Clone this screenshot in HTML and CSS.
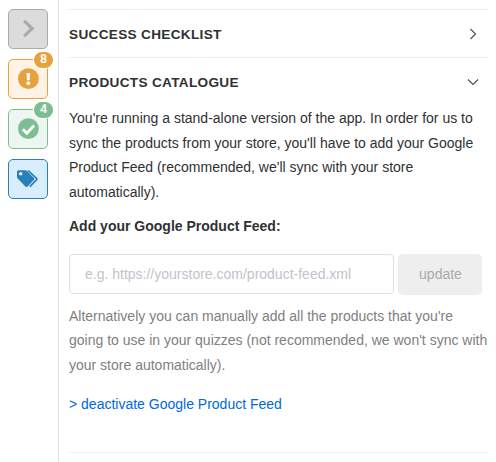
FILE: index.html
```html
<!DOCTYPE html>
<html lang="en">
<head>
<meta charset="utf-8">
<title>Products catalogue</title>
<link rel="stylesheet" href="styles.css">
</head>
<body>
<div class="app">
  <nav class="rail">
    <button class="tile tile-gray" aria-label="Expand">
      <svg width="38" height="38" viewBox="0 0 38 38"><path d="M15.2 10.8 23.2 18.5 15.2 26.2" fill="none" stroke="currentColor" stroke-width="3.2"/></svg>
    </button>
    <button class="tile tile-orange" aria-label="Warnings">
      <svg width="38" height="38" viewBox="0 0 38 38"><circle cx="19.4" cy="18.7" r="10.4" fill="currentColor"/><path d="M17.5 13h3.7l-.6 7.3h-2.5z" fill="#fff"/><circle cx="19.4" cy="23.2" r="1.9" fill="#fff"/></svg>
      <span class="badge"><b>8</b></span>
    </button>
    <button class="tile tile-green" aria-label="Completed">
      <svg width="38" height="38" viewBox="0 0 38 38"><circle cx="19.4" cy="18.7" r="10.4" fill="currentColor"/><path d="m13.8 19.2 4 4 7.3-7.6" fill="none" stroke="#fff" stroke-width="2.9"/></svg>
      <span class="badge"><b>4</b></span>
    </button>
    <button class="tile tile-blue" aria-label="Products">
      <svg width="38" height="38" viewBox="0 0 38 38"><path fill="currentColor" fill-rule="evenodd" d="M8 11.8q0-1.6 1.6-1.6h6.7q.9 0 1.5.6l7.1 7.1q1.1 1.1 0 2.2l-6.3 6.3q-1.1 1.1-2.2 0l-7.8-7.8q-.6-.6-.6-1.5zm3.7.1a1.8 1.8 0 1 0 0 3.6 1.8 1.8 0 0 0 0-3.6z"/><path fill="none" stroke="currentColor" stroke-width="1.7" d="m19.2 10.5 8.3 7.9q.7.7 0 1.4l-6.7 6.8"/></svg>
    </button>
  </nav>
  <main class="panel">
    <div class="heading"><h2>SUCCESS CHECKLIST</h2>
      <svg width="12" height="12" viewBox="0 0 12 12"><path d="m3.5 1 5 5-5 5"/></svg></div>
    <section class="catalogue">
      <div class="heading"><h2>PRODUCTS CATALOGUE</h2>
        <svg width="12" height="12" viewBox="0 0 12 12"><path d="m1 3.5 5 5 5-5"/></svg></div>
      <p class="intro">You're running a stand-alone version of the app. In order for us to<br>sync the products from your store, you'll have to add your Google<br>Product Feed (recommended, we'll sync with your store<br>automatically).</p>
      <p class="label">Add your Google Product Feed:</p>
      <div class="form">
        <input type="text" placeholder="e.g. https://yourstore.com/product-feed.xml">
        <button class="update" disabled>update</button>
      </div>
      <p class="note">Alternatively you can manually add all the products that you're<br>going to use in your quizzes (not recommended, we won't sync with<br>your store automatically).</p>
      <a class="link">&gt; deactivate Google Product Feed</a>
    </section>
  </main>
</div>
</body>
</html>
```

FILE: styles.css
```css
* { box-sizing: border-box; }
body { margin: 0; background: #fff; color: #303133; font: 14px/24.5px "Liberation Sans", Arial, sans-serif; overflow: hidden; }
.app { display: flex; height: 462px; }
.rail { width: 59px; flex: none; border-right: 1px solid #e3e3e6; padding: 9px 0 0 8px; display: flex; flex-direction: column; gap: 10px; }
.tile { position: relative; width: 40px; height: 40px; padding: 0; border: 1px solid currentColor; border-radius: 5px; }
.tile svg { display: block; }
.tile-gray { color: #aaa; background: #dcdcdc; }
.tile-orange { color: #e6a23c; background: #fff2e6; }
.tile-green { color: #7dbd92; background: #eef6f1; }
.tile-blue { color: #2980b9; background: #d9eefd; }
.badge { position: absolute; top: -8px; right: -6px; width: 19px; height: 16px; border-radius: 8px; background: currentColor; box-shadow: 0 0 0 1px #fff; font: bold 12px/15px "Liberation Sans", Arial, sans-serif; text-align: center; }
.badge b { color: #fff; }
.panel { width: 419px; margin: 9px 0 0 10px; flex: none; white-space: nowrap; }
.heading { height: 48px; border-top: 1px solid #ebeef5; display: flex; align-items: center; justify-content: space-between; padding: 1px 9px 0 0; }
.heading h2 { margin: 0; padding-top: 2px; font-size: 13.6px; line-height: 20px; letter-spacing: .32px; }
.heading svg { fill: none; stroke: #4b4d52; stroke-width: 1.1; }
.catalogue { height: 396px; border-bottom: 1px solid #ebeef5; }
p { margin: 0; }
.intro { padding-top: 1px; }
.label { font-weight: bold; margin-top: 10px; }
.form { display: flex; gap: 4px; margin-top: 15px; height: 41px; }
.form input { width: 325px; height: 40px; border: 1px solid #dcdfe6; border-radius: 4px; padding: 0 15px; font: inherit; background: #fff; }
.form input::placeholder { color: #c0c4cc; opacity: 1; }
.update { width: 84px; height: 41px; border: 0; border-radius: 5px; background: #eee; color: #aaa; font: inherit; padding: 0 0 0 1px; }
.note { color: #808080; margin-top: 9px; }
.link { display: block; color: #0069e0; margin-top: 15px; }
```
